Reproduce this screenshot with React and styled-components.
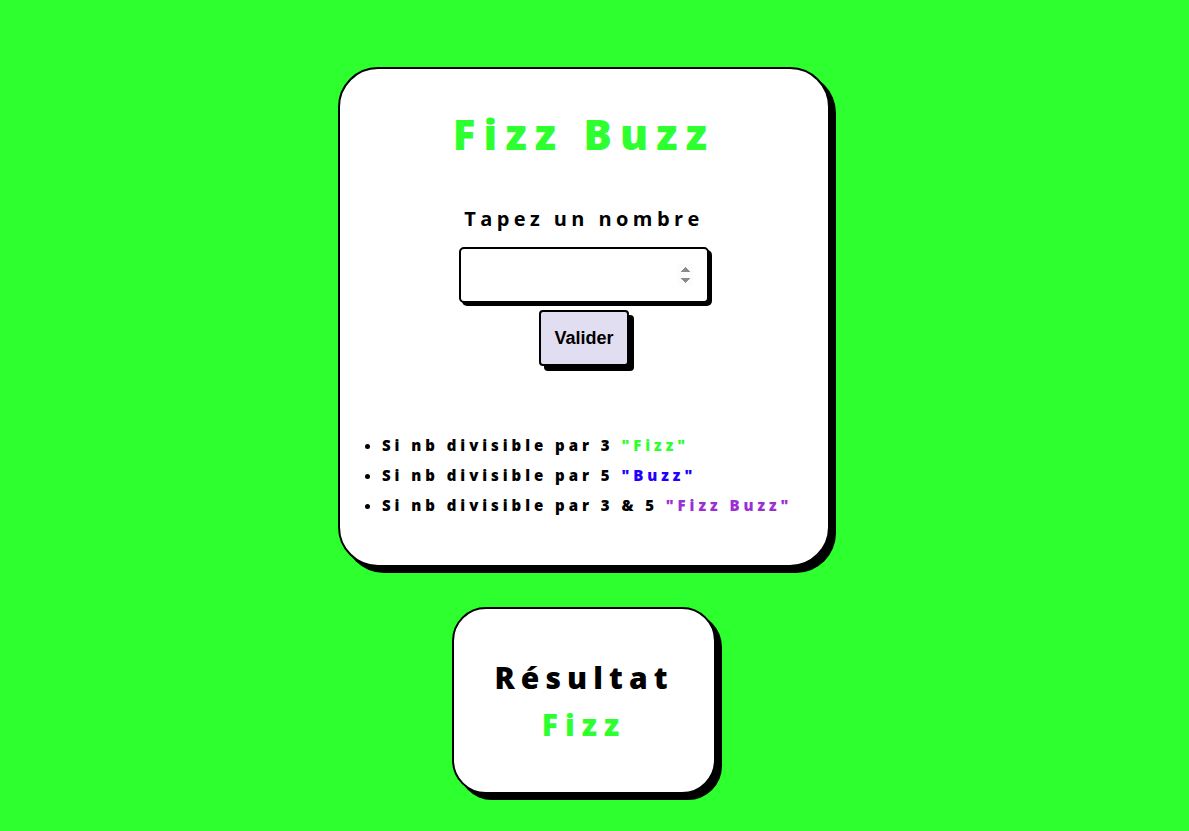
import React, { useState } from 'react'
import styled, { createGlobalStyle } from 'styled-components'

const GlobalStyle = createGlobalStyle`
  html, body {
    margin: 0;
    padding: 0;
    background: #2eff2e;
  }
  body {
    font-family: "Open Sans", Lato, sans-serif;
  }
`

const Page = styled.div`
  display: flex;
  flex-direction: column;
  align-items: center;
  padding: 67px 21px 0 0;
  min-height: 831px;
  box-sizing: border-box;
`
const Card = styled.div`
  background: #fff;
  border: 2px solid #000;
  border-radius: 40px;
  box-shadow: 6px 6px 0 #000;
  box-sizing: border-box;
  display: flex;
  flex-direction: column;
  align-items: center;
`
const MainCard = styled(Card)`
  width: 492px;
  height: 500px;
  padding: 42px 20px 0;
`
const ResultCard = styled(Card)`
  width: 264px;
  height: 187px;
  margin-top: 40px;
  border-radius: 34px;
  justify-content: center;
`
const Title = styled.h1`
  margin: 0;
  font-size: 42px;
  font-weight: 800;
  letter-spacing: 8.2px;
  color: #2eff2e;
  line-height: 1.1;
`
const Label = styled.label`
  margin-top: 52px;
  font-size: 20px;
  font-weight: 700;
  letter-spacing: 4.4px;
  color: #000;
  line-height: 1;
`
const NumberInput = styled.input`
  margin-top: 18px;
  width: 250px;
  height: 56px;
  box-sizing: border-box;
  border: 2px solid #000;
  border-radius: 5px;
  box-shadow: 3px 3px 0 #000;
  padding: 0 14px;
  font-size: 20px;
  font-family: "Liberation Sans", Arial, sans-serif;
  outline: none;
  &::-webkit-inner-spin-button {
    opacity: 1;
    height: 22px;
  }
`
const Button = styled.button`
  margin-top: 7px;
  width: 90px;
  height: 56px;
  background: #e2def2;
  border: 2px solid #000;
  border-radius: 4px;
  box-shadow: 5px 5px 0 #000;
  font-family: "Liberation Sans", Arial, sans-serif;
  font-size: 18px;
  font-weight: 700;
  color: #000;
  padding: 0;
`
const Rules = styled.ul`
  align-self: flex-start;
  margin: 64px 0 0;
  padding-left: 22px;
  list-style: disc;
`
const Rule = styled.li`
  font-size: 15px;
  font-weight: 800;
  letter-spacing: 3.95px;
  line-height: 30px;
  color: #000;
`
const Word = styled.span`
  color: ${props => props.color};
`
const ResultTitle = styled.h2`
  margin: 0;
  font-size: 30px;
  font-weight: 800;
  letter-spacing: 6.1px;
  line-height: 1.1;
  color: #000;
`
const ResultValue = styled.div`
  margin-top: 14px;
  font-size: 30px;
  font-weight: 800;
  letter-spacing: 7px;
  line-height: 1.1;
  color: #2eff2e;
`

const fizzBuzz = n => {
  if (n % 15 === 0) return 'Fizz Buzz'
  if (n % 3 === 0) return 'Fizz'
  if (n % 5 === 0) return 'Buzz'
  return String(n)
}

const App = () => {
  const [value, setValue] = useState('')
  const [result, setResult] = useState('Fizz')

  return (
    <Page>
      <GlobalStyle />
      <MainCard>
        <Title>Fizz Buzz</Title>
        <Label htmlFor="nb">Tapez un nombre</Label>
        <NumberInput
          id="nb"
          type="number"
          value={value}
          autoFocus
          onChange={e => setValue(e.target.value)}
        />
        <Button onClick={() => value !== '' && setResult(fizzBuzz(Number(value)))}>
          Valider
        </Button>
        <Rules>
          <Rule>Si nb divisible par 3 <Word color="#2eff2e">"Fizz"</Word></Rule>
          <Rule>Si nb divisible par 5 <Word color="#2200ff">"Buzz"</Word></Rule>
          <Rule>Si nb divisible par 3 &amp; 5 <Word color="#9b30d0">"Fizz Buzz"</Word></Rule>
        </Rules>
      </MainCard>
      <ResultCard>
        <ResultTitle>Résultat</ResultTitle>
        <ResultValue>{result}</ResultValue>
      </ResultCard>
    </Page>
  )
}

export default App
